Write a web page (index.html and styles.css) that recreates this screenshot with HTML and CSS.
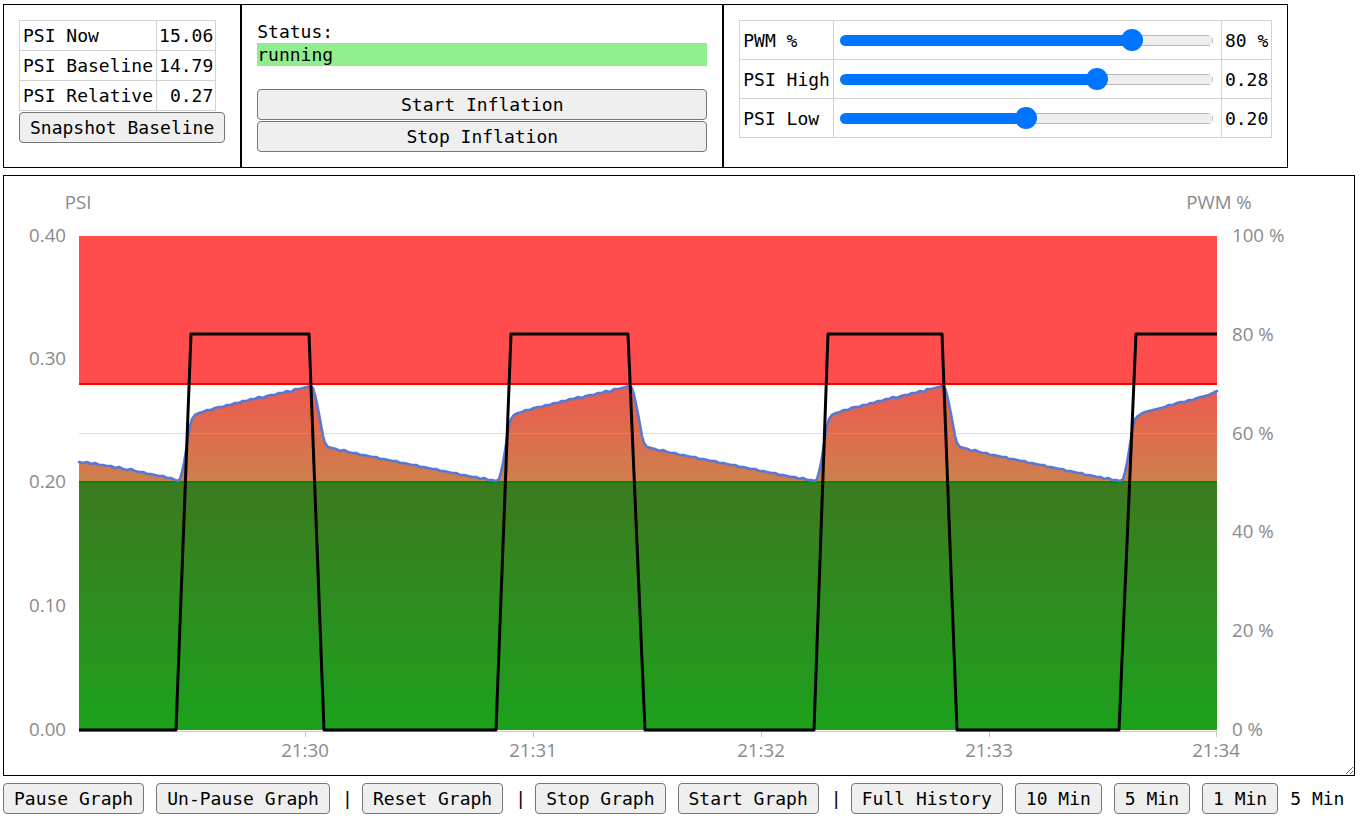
FILE: index.html
```html
<!DOCTYPE html>
<html lang="en">
<head>
<meta charset="utf-8">
<title>Inflation Controller</title>
<link rel="stylesheet" href="styles.css">
</head>
<body>
<div class="page">
  <div class="top">
    <div class="box">
      <table class="grid readings">
        <tr><td class="key">PSI Now</td><td class="num">15.06</td></tr>
        <tr><td class="key">PSI Baseline</td><td class="num">14.79</td></tr>
        <tr><td class="key">PSI Relative</td><td class="num">0.27</td></tr>
      </table>
      <button class="btn">Snapshot Baseline</button>
    </div>
    <div class="box status-box">
      <div class="line">Status:</div>
      <div class="line status-val">running</div>
      <div class="line"></div>
      <button class="btn block">Start Inflation</button>
      <button class="btn block gap">Stop Inflation</button>
    </div>
    <div class="box">
      <table class="grid sliders">
        <tr>
          <td class="lbl">PWM %</td>
          <td class="sl"><input class="range" type="range" min="0" max="100" value="80" style="--p:292px"></td>
          <td class="val">80 %</td>
        </tr>
        <tr>
          <td class="lbl">PSI High</td>
          <td class="sl"><input class="range" type="range" min="0" max="0.4" step="0.01" value="0.28" style="--p:257px"></td>
          <td class="val">0.28</td>
        </tr>
        <tr>
          <td class="lbl">PSI Low</td>
          <td class="sl"><input class="range" type="range" min="0" max="0.4" step="0.01" value="0.20" style="--p:187px"></td>
          <td class="val">0.20</td>
        </tr>
      </table>
    </div>
  </div>

  <div class="chart">
    <svg class="plot" width="1350" height="599" viewBox="4 176 1350 599" xmlns="http://www.w3.org/2000/svg">
      <defs>
        <linearGradient id="areaFill" gradientUnits="userSpaceOnUse" x1="0" y1="384" x2="0" y2="482">
          <stop offset="0" stop-color="#ef5950"/>
          <stop offset="1" stop-color="#cd804c"/>
        </linearGradient>
        <linearGradient id="greenFill" gradientUnits="userSpaceOnUse" x1="0" y1="482" x2="0" y2="730">
          <stop offset="0" stop-color="#3c7a1f"/>
          <stop offset="0.5" stop-color="#2d8d1f"/>
          <stop offset="1" stop-color="#1ca11c"/>
        </linearGradient>
      </defs>

      <!-- grid -->
      <g class="grid-lines">
        <line x1="79" y1="433.5" x2="1217" y2="433.5"/>
      </g>

      <!-- high band -->
      <rect x="79" y="236" width="1138" height="148" fill="#ff4d4d"/>

      <!-- PSI area -->
      <path fill="url(#areaFill)" d="M79,730 L79,462 83,463 87,462 91,464 95,463 99,465 103,465 107,466 111,466 115,468 119,467 123,469 127,470 131,469 135,471 139,472 143,472 147,474 151,474 155,475 159,476 163,476 167,478 171,478 175,480 178,481 180,479 182,472 184,463 186,451 188,438 190,426 192,419 195,415 199,413 203,412 207,410 211,410 215,408 219,407 223,407 227,405 231,405 235,403 239,403 243,401 247,401 251,399 255,399 259,397 263,398 267,396 271,395 275,395 279,393 283,393 287,391 291,392 295,389 299,389 303,388 307,387 310,386 313,388 315,395 317,404 319,414 321,425 323,436 325,443 328,447 332,448 336,449 340,451 344,450 348,452 352,453 356,453 360,455 364,455 368,456 372,457 376,457 380,459 384,459 388,460 392,461 396,461 400,463 404,463 408,464 412,465 416,465 420,467 424,467 428,468 432,469 436,469 440,471 444,471 448,472 452,473 456,473 460,475 464,475 468,476 472,477 476,477 480,479 484,478 488,480 492,480 496,481 499,479 501,472 503,463 505,451 507,438 509,426 511,419 514,415 518,413 522,412 526,410 530,410 534,408 538,407 542,407 546,405 550,405 554,403 558,403 562,401 566,401 570,399 574,399 578,397 582,398 586,396 590,395 594,395 598,393 602,393 606,391 610,392 614,389 618,389 622,388 626,387 629,386 632,388 634,395 636,404 638,414 640,425 642,436 644,443 647,447 651,448 655,449 659,451 663,450 667,452 671,453 675,453 679,455 683,455 687,456 691,457 695,457 699,459 703,459 707,460 711,461 715,461 719,463 723,463 727,464 731,465 735,465 739,467 743,467 747,468 751,469 755,469 759,471 763,471 767,472 771,473 775,473 779,475 783,475 787,476 791,477 795,477 799,479 803,478 807,480 811,480 815,481 817,479 819,472 821,463 823,451 825,438 827,426 829,419 832,415 836,413 840,412 844,410 848,410 851,408 855,407 859,407 863,405 867,405 870,403 874,403 878,401 882,401 886,399 889,399 893,397 897,398 901,396 905,395 908,395 912,393 916,393 920,391 924,392 927,389 931,389 935,388 939,387 942,386 945,388 947,395 949,404 951,414 953,425 955,436 957,443 960,447 964,448 968,449 971,451 975,450 979,452 983,453 987,453 990,455 994,455 998,456 1002,457 1006,457 1009,459 1013,459 1017,460 1021,461 1025,461 1028,463 1032,463 1036,464 1040,465 1044,465 1047,467 1051,467 1055,468 1059,469 1063,469 1066,471 1070,471 1074,472 1078,473 1082,473 1085,475 1089,475 1093,476 1097,477 1101,477 1104,479 1108,478 1112,480 1116,480 1120,481 1123,479 1125,472 1127,463 1129,451 1131,438 1133,426 1135,419 1138,416 1141,414 1145,412 1149,411 1153,410 1157,409 1161,408 1165,407 1169,405 1173,405 1177,403 1181,402 1185,402 1189,400 1193,400 1197,398 1201,397 1205,396 1209,395 1213,393 1217,391 L1217,730 Z"/>

      <!-- low band -->
      <rect x="79" y="482" width="1138" height="248" fill="url(#greenFill)"/>

      <line class="grid-over" x1="79" y1="433.5" x2="1217" y2="433.5"/>

      <!-- threshold lines -->
      <line x1="79" y1="384" x2="1217" y2="384" stroke="#ff0000" stroke-width="2"/>
      <line x1="79" y1="482" x2="1217" y2="482" stroke="#0a850a" stroke-width="2"/>

      <!-- x axis -->
      <g class="axis">
        <line x1="79" y1="731.5" x2="1217" y2="731.5"/>
        <line x1="305.5" y1="731" x2="305.5" y2="737"/>
        <line x1="533.5" y1="731" x2="533.5" y2="737"/>
        <line x1="761.5" y1="731" x2="761.5" y2="737"/>
        <line x1="989.5" y1="731" x2="989.5" y2="737"/>
        <line x1="1216.5" y1="731" x2="1216.5" y2="737"/>
      </g>

      <!-- PSI line -->
      <path class="psi-line" d="M79,462 83,463 87,462 91,464 95,463 99,465 103,465 107,466 111,466 115,468 119,467 123,469 127,470 131,469 135,471 139,472 143,472 147,474 151,474 155,475 159,476 163,476 167,478 171,478 175,480 178,481 180,479 182,472 184,463 186,451 188,438 190,426 192,419 195,415 199,413 203,412 207,410 211,410 215,408 219,407 223,407 227,405 231,405 235,403 239,403 243,401 247,401 251,399 255,399 259,397 263,398 267,396 271,395 275,395 279,393 283,393 287,391 291,392 295,389 299,389 303,388 307,387 310,386 313,388 315,395 317,404 319,414 321,425 323,436 325,443 328,447 332,448 336,449 340,451 344,450 348,452 352,453 356,453 360,455 364,455 368,456 372,457 376,457 380,459 384,459 388,460 392,461 396,461 400,463 404,463 408,464 412,465 416,465 420,467 424,467 428,468 432,469 436,469 440,471 444,471 448,472 452,473 456,473 460,475 464,475 468,476 472,477 476,477 480,479 484,478 488,480 492,480 496,481 499,479 501,472 503,463 505,451 507,438 509,426 511,419 514,415 518,413 522,412 526,410 530,410 534,408 538,407 542,407 546,405 550,405 554,403 558,403 562,401 566,401 570,399 574,399 578,397 582,398 586,396 590,395 594,395 598,393 602,393 606,391 610,392 614,389 618,389 622,388 626,387 629,386 632,388 634,395 636,404 638,414 640,425 642,436 644,443 647,447 651,448 655,449 659,451 663,450 667,452 671,453 675,453 679,455 683,455 687,456 691,457 695,457 699,459 703,459 707,460 711,461 715,461 719,463 723,463 727,464 731,465 735,465 739,467 743,467 747,468 751,469 755,469 759,471 763,471 767,472 771,473 775,473 779,475 783,475 787,476 791,477 795,477 799,479 803,478 807,480 811,480 815,481 817,479 819,472 821,463 823,451 825,438 827,426 829,419 832,415 836,413 840,412 844,410 848,410 851,408 855,407 859,407 863,405 867,405 870,403 874,403 878,401 882,401 886,399 889,399 893,397 897,398 901,396 905,395 908,395 912,393 916,393 920,391 924,392 927,389 931,389 935,388 939,387 942,386 945,388 947,395 949,404 951,414 953,425 955,436 957,443 960,447 964,448 968,449 971,451 975,450 979,452 983,453 987,453 990,455 994,455 998,456 1002,457 1006,457 1009,459 1013,459 1017,460 1021,461 1025,461 1028,463 1032,463 1036,464 1040,465 1044,465 1047,467 1051,467 1055,468 1059,469 1063,469 1066,471 1070,471 1074,472 1078,473 1082,473 1085,475 1089,475 1093,476 1097,477 1101,477 1104,479 1108,478 1112,480 1116,480 1120,481 1123,479 1125,472 1127,463 1129,451 1131,438 1133,426 1135,419 1138,416 1141,414 1145,412 1149,411 1153,410 1157,409 1161,408 1165,407 1169,405 1173,405 1177,403 1181,402 1185,402 1189,400 1193,400 1197,398 1201,397 1205,396 1209,395 1213,393 1217,391"/>

      <!-- PWM line -->
      <path class="pwm-line" d="M79,730 L176,730 L191,334 L309,334 L324,730 L496,730 L511,334 L628,334 L645,730 L814,730 L828,334 L942,334 L957,730 L1119,730 L1136,334 L1217,334"/>

      <!-- labels -->
      <g class="labels">
        <text x="78" y="209" text-anchor="middle">PSI</text>
        <text x="1219" y="209" text-anchor="middle">PWM %</text>

        <text x="66" y="242" text-anchor="end">0.40</text>
        <text x="66" y="365" text-anchor="end">0.30</text>
        <text x="66" y="488" text-anchor="end">0.20</text>
        <text x="66" y="612" text-anchor="end">0.10</text>
        <text x="66" y="736" text-anchor="end">0.00</text>

        <text x="1232" y="242">100 %</text>
        <text x="1232" y="341">80 %</text>
        <text x="1232" y="440">60 %</text>
        <text x="1232" y="538">40 %</text>
        <text x="1232" y="637">20 %</text>
        <text x="1232" y="736">0 %</text>

        <text x="305" y="757" text-anchor="middle">21:30</text>
        <text x="533" y="757" text-anchor="middle">21:31</text>
        <text x="761" y="757" text-anchor="middle">21:32</text>
        <text x="989" y="757" text-anchor="middle">21:33</text>
        <text x="1216" y="757" text-anchor="middle">21:34</text>
      </g>
    </svg>
  </div>

  <div class="controls">
    <button class="btn">Pause Graph</button>
    <button class="btn">Un-Pause Graph</button>
    <span class="sep">|</span>
    <button class="btn">Reset Graph</button>
    <span class="sep">|</span>
    <button class="btn">Stop Graph</button>
    <button class="btn">Start Graph</button>
    <span class="sep">|</span>
    <button class="btn">Full History</button>
    <button class="btn">10 Min</button>
    <button class="btn">5 Min</button>
    <button class="btn">1 Min</button>
    <span class="range-label">5 Min</span>
  </div>
</div>
</body>
</html>
```

FILE: styles.css
```css
html, body {
  margin: 0;
  padding: 0;
  background: #fff;
}

body {
  font-family: "DejaVu Sans Mono", "Liberation Mono", monospace;
  font-size: 18px;
  line-height: 23px;
  color: #000;
}

.page {
  padding: 4px 0 0 3px;
}

.top {
  display: flex;
  align-items: stretch;
}

.box {
  border: 1px solid #000;
  padding: 15px;
}

.status-box {
  width: 450px;
}

.line {
  height: 23px;
}

.status-val {
  background: #90ee90;
}

/* tables */
.grid {
  border-collapse: collapse;
}

.grid td {
  border: 1px solid #d3d3d3;
  padding: 0 2px;
  white-space: nowrap;
  vertical-align: middle;
}

.readings td {
  height: 29px;
}

.readings .key {
  padding: 0 3px;
}

.readings .num {
  text-align: right;
}

.sliders td {
  height: 38px;
  padding: 0 3px;
}

.sliders .sl {
  width: 381px;
  padding: 0 3px;
}

/* buttons */
.btn {
  font-family: inherit;
  font-size: 18px;
  line-height: 23px;
  color: #000;
  background: #efefef;
  border: 1px solid #767676;
  border-radius: 4px;
  height: 31px;
  padding: 0 10px;
  margin: 0;
  box-sizing: border-box;
  white-space: nowrap;
}

.btn.block {
  display: block;
  width: 100%;
}

.btn.gap {
  margin-top: 1px;
}

.readings + .btn {
  display: block;
  margin-top: 1px;
}

/* range sliders */
.range {
  -webkit-appearance: none;
  appearance: none;
  display: block;
  width: 373px;
  height: 22px;
  margin: 0 0 0 3px;
  padding: 0;
  background: transparent;
}

.range::-webkit-slider-runnable-track {
  height: 11px;
  border-radius: 6px;
  background:
    linear-gradient(#efefef, #efefef) var(--p) 1px / calc(100% - var(--p) - 1px) calc(100% - 2px) no-repeat,
    linear-gradient(to right, #0075ff var(--p), #b5b5b5 var(--p));
}

.range::-webkit-slider-thumb {
  -webkit-appearance: none;
  appearance: none;
  width: 22px;
  height: 22px;
  margin-top: -5.5px;
  border: none;
  border-radius: 50%;
  background: #0075ff;
}

/* chart */
.chart {
  width: 1350px;
  height: 599px;
  margin-top: 7px;
  border: 1px solid #000;
  resize: both;
  overflow: hidden;
}

.plot {
  display: block;
}

.grid-lines line {
  stroke: #e3e6f1;
  stroke-width: 1;
}

.grid-over {
  stroke: rgba(190, 196, 226, 0.25);
  stroke-width: 1;
}

.axis line {
  stroke: #c8c8c8;
  stroke-width: 1;
}

.psi-line {
  fill: none;
  stroke: #5878d2;
  stroke-width: 2.6;
  stroke-linejoin: round;
  stroke-linecap: round;
}

.pwm-line {
  fill: none;
  stroke: #000;
  stroke-width: 3;
  stroke-linejoin: round;
}

.labels text {
  font-family: "Open Sans", "Noto Sans", sans-serif;
  font-size: 18.7px;
  fill: #8a8a8a;
}

/* bottom controls */
.controls {
  display: flex;
  align-items: center;
  gap: 12px;
  margin-top: 7px;
}

.sep {
  width: 8px;
  text-align: center;
}

.range-label {
  white-space: nowrap;
}
```
